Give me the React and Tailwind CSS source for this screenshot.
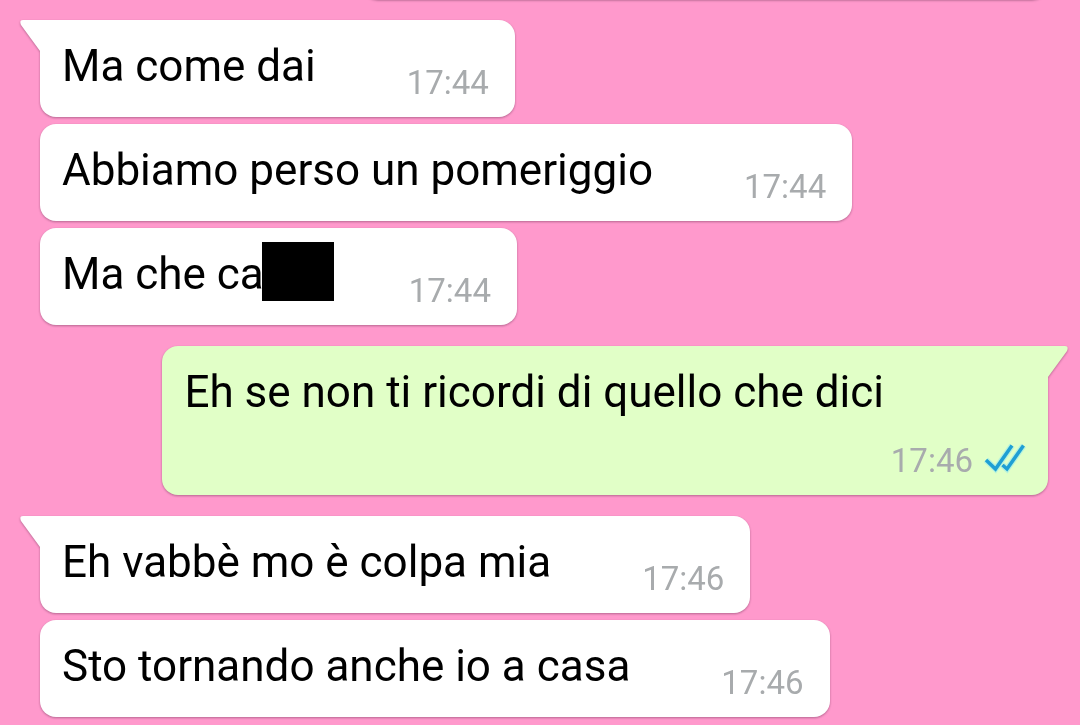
const groups = [
  {
    side: "in",
    messages: [
      { text: "Ma come dai", time: "17:44" },
      { text: "Abbiamo perso un pomeriggio", time: "17:44" },
      { text: "Ma che ca", time: "17:44", redacted: true },
    ],
  },
  {
    side: "out",
    messages: [{ text: "Eh se non ti ricordi di quello che dici", time: "17:46" }],
  },
  {
    side: "in",
    messages: [
      { text: "Eh vabbè mo è colpa mia", time: "17:46" },
      { text: "Sto tornando anche io a casa", time: "17:46" },
    ],
  },
];

function Tail({ side }) {
  return side === "in" ? (
    <svg className="absolute top-0 -left-5" width="40" height="32" viewBox="0 0 40 32" aria-hidden="true">
      <path d="M3 0H40V32H20V31L1 5Q-1 0 3 0Z" fill="#fff" />
    </svg>
  ) : (
    <svg className="absolute top-0 -right-5" width="40" height="32" viewBox="0 0 40 32" aria-hidden="true">
      <path d="M37 0H0V32H20V31L39 5Q41 0 37 0Z" fill="#e1ffc7" />
    </svg>
  );
}

function ReadTicks() {
  return (
    <svg width="42" height="36" viewBox="0 0 42 36" fill="none" role="img" aria-label="Letto">
      <g stroke="#7fe3fb" strokeOpacity="0.45" strokeWidth="6">
        <path d="M2 17L11.5 26L28 2.5M18.5 22L23 26L39.5 2.5" />
      </g>
      <g stroke="#1f9fd4" strokeWidth="3.5">
        <path d="M2 17L11.5 26L28 2.5" />
        <path d="M18.5 22L23 26L39.5 2.5" />
      </g>
    </svg>
  );
}

function Time({ value }) {
  return <time className="text-[33px] leading-10 text-[#a8abad]">{value}</time>;
}

function Incoming({ message, tail }) {
  return (
    <li className="relative flex items-end gap-[91px] rounded-2xl bg-white pt-5 pr-[26px] pb-[14px] pl-[22px] drop-shadow-[0_1px_1px_rgba(90,40,70,0.45)]">
      {tail && <Tail side="in" />}
      <p className="mb-[11px] flex h-[52px] items-start whitespace-nowrap">
        {message.text}
        {message.redacted && <span className="-mt-[6px] -mr-4 -ml-0.5 h-[59px] w-[72px] bg-black" />}
      </p>
      <Time value={message.time} />
    </li>
  );
}

function Outgoing({ message, tail }) {
  return (
    <li className="relative flex flex-col gap-[23px] rounded-2xl bg-[#e1ffc7] pt-5 pr-[22px] pb-[14px] pl-[22px] drop-shadow-[0_1px_1px_rgba(90,40,70,0.45)]">
      {tail && <Tail side="out" />}
      <p className="pr-[142px]">{message.text}</p>
      <div className="flex items-center justify-end gap-[11px]">
        <Time value={message.time} />
        <ReadTicks />
      </div>
    </li>
  );
}

export default function App() {
  return (
    <main
      lang="it"
      className="flex min-h-screen flex-col overflow-hidden bg-[#ff99cc] pr-8 pb-2 pl-10 font-[Roboto,sans-serif] text-[44px] leading-[52px] text-black"
    >
      <div className="-mt-[17px] mb-[21px] ml-[322px] h-4 rounded-b-2xl bg-[#e1ffc7] shadow-[0_2px_2px_rgba(90,40,70,0.35)]" />
      <div className="flex flex-col gap-[21px]">
        {groups.map((group, g) => (
          <ul
            key={g}
            className={
              group.side === "in"
                ? "flex flex-col items-start gap-[7px]"
                : "flex flex-col items-end gap-[7px]"
            }
          >
            {group.messages.map((message, i) =>
              group.side === "in" ? (
                <Incoming key={i} message={message} tail={i === 0} />
              ) : (
                <Outgoing key={i} message={message} tail={i === 0} />
              )
            )}
          </ul>
        ))}
      </div>
    </main>
  );
}
